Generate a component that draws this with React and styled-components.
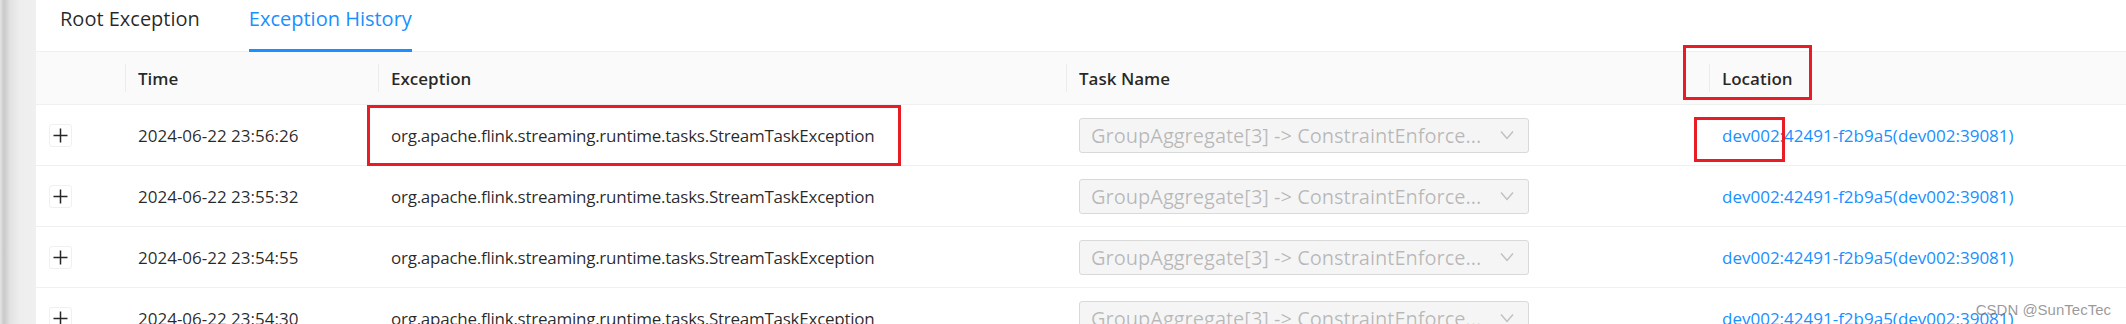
import React from 'react';
import styled, { createGlobalStyle } from 'styled-components';

const GlobalStyle = createGlobalStyle`
  html, body {
    margin: 0;
    padding: 0;
    background: #fff;
    overflow: hidden;
  }
  body {
    font-family: "Open Sans", "Noto Sans", "Liberation Sans", sans-serif;
    color: rgba(0, 0, 0, 0.85);
  }
`;

const Page = styled.div`
  position: relative;
  display: flex;
  width: 2126px;
  height: 324px;
  overflow: hidden;
`;

const SideStrip = styled.div`
  width: 36px;
  flex: none;
  background: linear-gradient(to right, #e4e4e4 0px, #c9c9c9 4px, #e2e2e2 10px, #eeeeee 20px, #f0f0f0 36px);
`;

const Main = styled.div`
  flex: 1;
  display: flex;
  flex-direction: column;
  min-width: 0;
`;

const TabBar = styled.div`
  display: flex;
  flex: none;
  align-items: stretch;
  gap: 49px;
  height: 52px;
  padding-left: 24px;
  border-bottom: 1px solid #f0f0f0;
  box-sizing: border-box;
`;

const Tab = styled.div`
  display: flex;
  align-items: flex-start;
  padding-top: 5px;
  font-size: 20px;
  color: ${p => (p.$active ? '#1890ff' : 'rgba(0, 0, 0, 0.85)')};
  border-bottom: 3px solid ${p => (p.$active ? '#1890ff' : 'transparent')};
  margin-bottom: -1px;
  box-sizing: border-box;
`;

const COLUMNS = '89px 253px 688px 643px 1fr';

const HeaderRow = styled.div`
  display: grid;
  flex: none;
  grid-template-columns: ${COLUMNS};
  height: 53px;
  background: #fafafa;
  border-bottom: 1px solid #f0f0f0;
  box-sizing: border-box;
`;

const HeaderCell = styled.div`
  position: relative;
  display: flex;
  align-items: center;
  padding-left: 13px;
  font-size: 17px;
  font-weight: 600;
  color: rgba(0, 0, 0, 0.85);

  ${p => p.$divider && `
    &::before {
      content: '';
      position: absolute;
      left: 0;
      top: 12px;
      bottom: 12px;
      width: 1px;
      background: #ececec;
    }
  `}
`;

const Row = styled.div`
  display: grid;
  grid-template-columns: ${COLUMNS};
  height: 61px;
  flex: none;
  border-bottom: 1px solid #f0f0f0;
  box-sizing: border-box;
`;

const Cell = styled.div`
  display: flex;
  align-items: center;
  padding-left: 13px;
  font-size: 17px;
  white-space: nowrap;
  letter-spacing: ${p => (p.$tight ? '-0.25px' : 'normal')};
  color: ${p => (p.$link ? '#1890ff' : 'rgba(0, 0, 0, 0.85)')};
`;

const ExpandButton = styled.button`
  display: flex;
  align-items: center;
  justify-content: center;
  width: 23px;
  height: 23px;
  padding: 0;
  background: #fff;
  border: 1px solid #f0f0f0;
  border-radius: 3px;
  cursor: pointer;
`;

const Select = styled.div`
  display: flex;
  align-items: center;
  justify-content: space-between;
  width: 450px;
  height: 35px;
  padding: 0 14px 0 11px;
  box-sizing: border-box;
  background: #f5f5f5;
  border: 1px solid #d9d9d9;
  border-radius: 3px;
  color: rgba(0, 0, 0, 0.25);
  font-size: 20px;
  cursor: not-allowed;
`;

const SelectText = styled.span`
  overflow: hidden;
  white-space: nowrap;
  text-overflow: ellipsis;
`;

const Mark = styled.div`
  position: absolute;
  border: 3px solid #e81c24;
  box-sizing: border-box;
  pointer-events: none;
`;

const Watermark = styled.div`
  position: absolute;
  right: 15px;
  bottom: 6px;
  font-family: "Liberation Sans", Arial, sans-serif;
  font-size: 15px;
  color: rgba(120, 120, 120, 0.75);
`;

const PlusIcon = () => (
  <svg width="15" height="15" viewBox="0 0 15 15">
    <path d="M7.5 0.5v14M0.5 7.5h14" stroke="#262626" strokeWidth="1.5" fill="none" />
  </svg>
);

const ChevronIcon = () => (
  <svg width="14" height="10" viewBox="0 0 14 10">
    <path d="M1 1.5l6 7 6-7" stroke="#bfbfbf" strokeWidth="1.4" fill="none" />
  </svg>
);

const rows = [
  '2024-06-22 23:56:26',
  '2024-06-22 23:55:32',
  '2024-06-22 23:54:55',
  '2024-06-22 23:54:30',
];

const EXCEPTION = 'org.apache.flink.streaming.runtime.tasks.StreamTaskException';
const TASK = 'GroupAggregate[3] -> ConstraintEnforce...';
const LOCATION = 'dev002:42491-f2b9a5(dev002:39081)';

export default function App() {
  return (
    <>
      <GlobalStyle />
      <Page>
        <SideStrip />
        <Main>
          <TabBar>
            <Tab>Root Exception</Tab>
            <Tab $active>Exception History</Tab>
          </TabBar>
          <HeaderRow>
            <HeaderCell />
            <HeaderCell $divider>Time</HeaderCell>
            <HeaderCell $divider>Exception</HeaderCell>
            <HeaderCell $divider>Task Name</HeaderCell>
            <HeaderCell $divider>Location</HeaderCell>
          </HeaderRow>
          {rows.map(time => (
            <Row key={time}>
              <Cell>
                <ExpandButton aria-label="Expand row">
                  <PlusIcon />
                </ExpandButton>
              </Cell>
              <Cell>{time}</Cell>
              <Cell $tight>{EXCEPTION}</Cell>
              <Cell>
                <Select>
                  <SelectText>{TASK}</SelectText>
                  <ChevronIcon />
                </Select>
              </Cell>
              <Cell $link>{LOCATION}</Cell>
            </Row>
          ))}
        </Main>
        <Mark style={{ left: 367, top: 105, width: 534, height: 61 }} />
        <Mark style={{ left: 1683, top: 45, width: 129, height: 55 }} />
        <Mark style={{ left: 1694, top: 117, width: 91, height: 45 }} />
        <Watermark>CSDN @SunTecTec</Watermark>
      </Page>
    </>
  );
}
